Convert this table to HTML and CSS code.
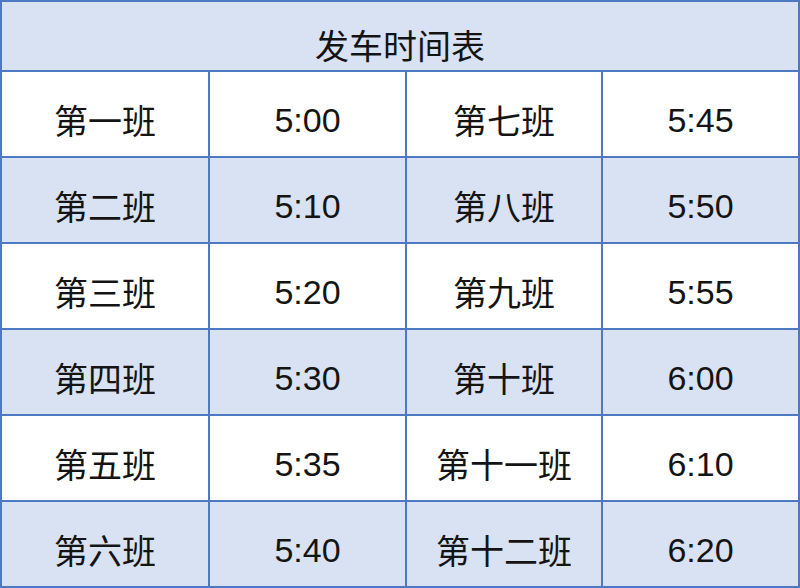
FILE: index.html
```html
<!DOCTYPE html>
<html lang="zh">
<head>
<meta charset="utf-8">
<title>发车时间表</title>
<link rel="stylesheet" href="styles.css">
</head>
<body>
<div class="table">
  <div class="title">发车时间表</div>
  <div class="cell name">第一班</div><div class="cell time">5:00</div><div class="cell name">第七班</div><div class="cell time">5:45</div>
  <div class="cell name alt">第二班</div><div class="cell time alt">5:10</div><div class="cell name alt">第八班</div><div class="cell time alt">5:50</div>
  <div class="cell name">第三班</div><div class="cell time">5:20</div><div class="cell name">第九班</div><div class="cell time">5:55</div>
  <div class="cell name alt">第四班</div><div class="cell time alt">5:30</div><div class="cell name alt">第十班</div><div class="cell time alt">6:00</div>
  <div class="cell name">第五班</div><div class="cell time">5:35</div><div class="cell name">第十一班</div><div class="cell time">6:10</div>
  <div class="cell name alt">第六班</div><div class="cell time alt">5:40</div><div class="cell name alt">第十二班</div><div class="cell time alt">6:20</div>
</div>
</body>
</html>
```

FILE: styles.css
```css
html, body {
  margin: 0;
  padding: 0;
  background: #ffffff;
}

.table {
  box-sizing: border-box;
  width: 800px;
  height: 588px;
  padding: 2px;
  display: grid;
  grid-template-columns: 206px 195px 194px 1fr;
  grid-template-rows: 68px repeat(6, 84px);
  gap: 2px;
  background: #4f78c4;
  color: #141414;
}

.title {
  grid-column: 1 / -1;
  background: #d9e2f3;
  display: flex;
  align-items: center;
  justify-content: center;
  padding-top: 17px;
  box-sizing: border-box;
  font-family: "Noto Sans CJK SC", "Liberation Sans", sans-serif;
  font-size: 34px;
  line-height: 1;
}

.cell {
  background: #ffffff;
  display: flex;
  align-items: center;
  justify-content: center;
  box-sizing: border-box;
  padding-top: 12px;
  font-size: 34px;
  line-height: 1;
}

.cell.alt {
  background: #d9e2f3;
}

.name {
  font-family: "Noto Sans CJK SC", sans-serif;
}

.time {
  font-family: "Liberation Sans", Arial, sans-serif;
}
```
